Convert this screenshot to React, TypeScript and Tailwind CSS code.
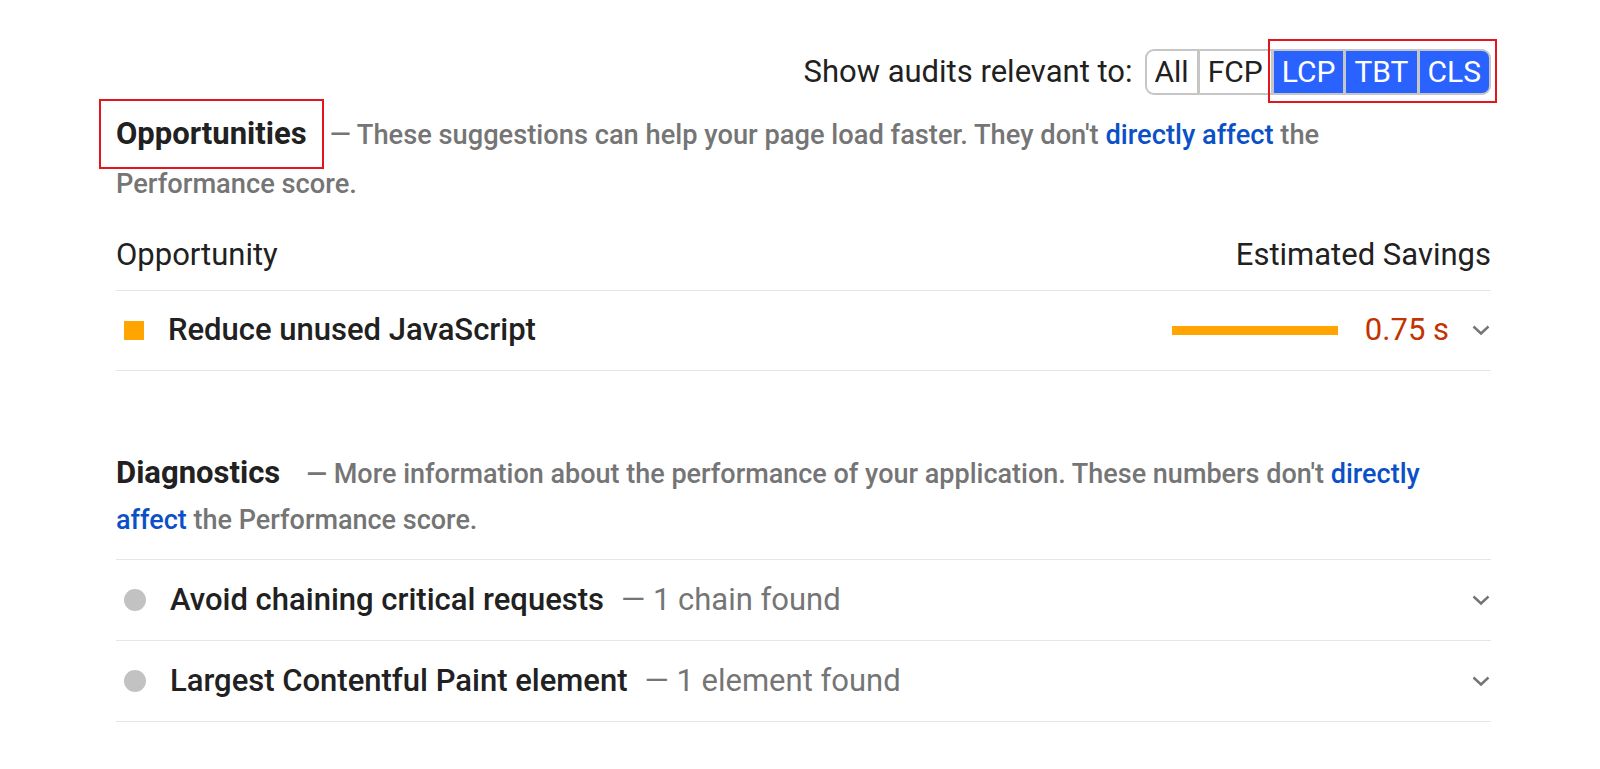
import React from 'react';

interface Diagnostic {
  id: string;
  title: string;
  detail: string;
}

const filters = [
  { label: 'All', active: false },
  { label: 'FCP', active: false },
  { label: 'LCP', active: true },
  { label: 'TBT', active: true },
  { label: 'CLS', active: true },
];

const diagnostics: Diagnostic[] = [
  { id: 'critical-request-chains', title: 'Avoid chaining critical requests', detail: '1 chain found' },
  { id: 'largest-contentful-paint-element', title: 'Largest Contentful Paint element', detail: '1 element found' },
];

const Chevron: React.FC = () => (
  <svg width="18" height="11" viewBox="0 0 18 11" fill="none" className="shrink-0">
    <polyline points="1.5,1.5 9,8.5 16.5,1.5" stroke="#757575" strokeWidth="2.4" />
  </svg>
);

const FilterBar: React.FC = () => {
  const plain = filters.filter(f => !f.active);
  const active = filters.filter(f => f.active);

  return (
    <div className="flex items-center justify-end h-[46px]">
      <span className="text-[31px] text-[#212121] mr-[12px]">Show audits relevant to:</span>
      <div className="flex h-[46px] rounded-[9px] border-2 border-[#c6c6c6] bg-[#c6c6c6] gap-[3px] overflow-hidden">
        {plain.map(f => (
          <button key={f.label} className="bg-white text-[30px] text-[#212121] px-[8px] leading-none">
            {f.label}
          </button>
        ))}
        <div className="flex gap-[3px]">
          {active.map(f => (
            <button key={f.label} className="bg-[#2962ff] text-[30px] text-white px-[8px] leading-none">
              {f.label}
            </button>
          ))}
        </div>
      </div>
    </div>
  );
};

const App: React.FC = () => {
  return (
    <div className="min-h-screen bg-white font-['Roboto',sans-serif]">
      <div className="relative ml-[116px] w-[1375px] pt-[49px]">
        <FilterBar />
        {/* red annotation around LCP / TBT / CLS */}
        <div className="absolute right-[-6px] top-[39px] w-[229px] h-[64px] border-2 border-[#e3161d] pointer-events-none" />

        <div className="mt-[16px] max-w-[1340px] text-[27.25px] leading-[49px] font-medium text-[#757575]">
          <span className="inline-block leading-[36px] text-[31px] font-bold text-[#212121] mr-[23px] outline-2 outline-[#e3161d] outline-offset-[15px]">
            Opportunities
          </span>
          — These suggestions can help your page load faster. They don't{' '}
          <a className="text-[#0c50c7]">directly affect</a> the Performance score.
        </div>

        <div className="mt-[26px] flex justify-between text-[31px] leading-[40px] text-[#212121] pb-[15px] border-b border-[#e6e6e6]">
          <span>Opportunity</span>
          <span>Estimated Savings</span>
        </div>

        <div className="flex items-center h-[80px] border-b border-[#e6e6e6]">
          <span className="ml-[8px] w-[20px] h-[19px] bg-[#ffa400] shrink-0" />
          <span className="ml-[24px] text-[31px] font-medium text-[#212121] flex-1">Reduce unused JavaScript</span>
          <span className="w-[166px] h-[9px] bg-[#ffa400]" />
          <span className="ml-[27px] text-[31px] text-[#c33300]">0.75 s</span>
          <span className="ml-[23px] mr-[1px]">
            <Chevron />
          </span>
        </div>

        <div className="mt-[79px] text-[27px] leading-[46px] font-medium text-[#757575]">
          <span className="text-[31px] font-bold text-[#212121] mr-[26px]">Diagnostics</span>
          — More information about the performance of your application. These numbers don't{' '}
          <a className="text-[#0c50c7]">directly affect</a> the Performance score.
        </div>

        <div className="mt-[16px] border-t border-[#e6e6e6]">
          {diagnostics.map(d => (
            <div key={d.id} className="flex items-center h-[81px] border-b border-[#e6e6e6]">
              <span className="ml-[8px] w-[22px] h-[22px] rounded-full bg-[#c2c2c2] shrink-0" />
              <span className="ml-[24px] text-[31px] font-medium text-[#212121]">{d.title}</span>
              <span className="ml-[17px] text-[31px] text-[#757575] flex-1">— {d.detail}</span>
              <span className="mr-[1px]">
                <Chevron />
              </span>
            </div>
          ))}
        </div>
      </div>
    </div>
  );
};

export default App;
